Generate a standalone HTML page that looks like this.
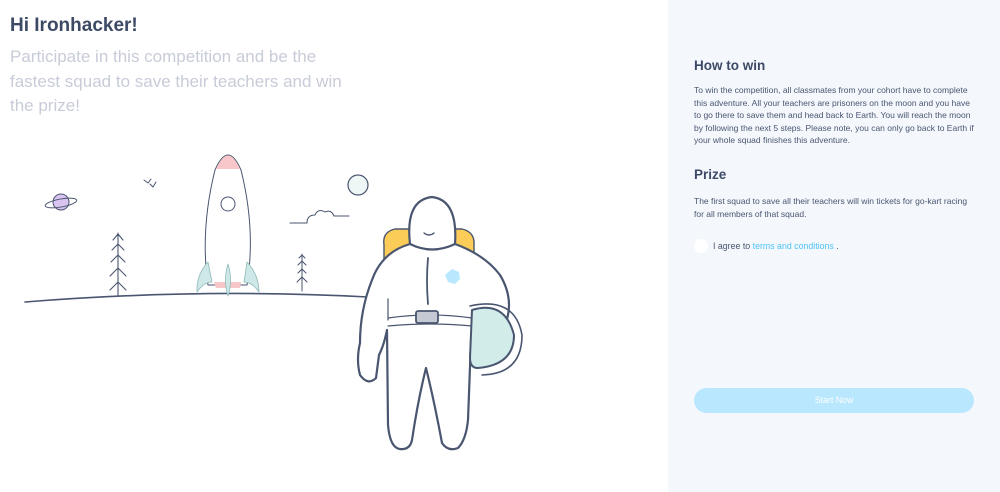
<!DOCTYPE html>
<html><head><meta charset="utf-8"><style>
*{margin:0;padding:0;box-sizing:border-box}
body{width:1000px;height:492px;overflow:hidden;background:#fff;font-family:"Liberation Sans",sans-serif;position:relative}
.left{position:absolute;left:0;top:0;width:668px;height:492px;background:#fff}
h1{position:absolute;left:10px;top:15px;font-size:19px;font-weight:bold;color:#3d4a66}
.sub{position:absolute;left:10px;top:45px;width:345px;font-size:17px;line-height:24.5px;color:#c8ccd8}
.right{position:absolute;left:668px;top:0;width:332px;height:492px;background:#f4f7fc}
h2{position:absolute;left:26px;font-size:13.5px;font-weight:bold;color:#3d4a66}
.p{position:absolute;left:26px;width:280px;font-size:8.5px;line-height:12.5px;color:#4a5670}
.chk{position:absolute;left:26px;top:239px;width:14px;height:14px;border-radius:50%;background:#fff}
.agree{position:absolute;left:45px;top:241px;font-size:8.8px;color:#4a5670}
.agree a{color:#4fc3f7;text-decoration:none}
.btn{position:absolute;left:26px;top:388px;width:280px;height:25px;border-radius:13px;background:#b9e7fe;color:#fff;font-size:8.8px;text-align:center;line-height:25px}
</style></head><body>
<div class="left">
<h1>Hi Ironhacker!</h1>
<div class="sub">Participate in this competition and be the fastest squad to save their teachers and win the prize!</div>
<svg width="668" height="492" style="position:absolute;left:0;top:0" fill="none" stroke="#4a5670" stroke-linecap="round" stroke-linejoin="round">
<path d="M25 302 Q200 288 368 297" stroke-width="1.6"/>
<circle cx="61" cy="202" r="8" fill="#d9c3f0" stroke-width="1"/>
<ellipse cx="61" cy="203" rx="16" ry="4" transform="rotate(-10 61 203)" stroke-width="1"/>
<path d="M144 180 l4 3 l3 -4 M150 184 l3 3 l3 -5" stroke-width="1"/>
<circle cx="358" cy="185" r="10" fill="#eef6f6" stroke-width="1.2"/>
<path d="M290 223 h17 q0 -8 8 -8 q3 -7 10 -3 q6 -3 9 4 h15" stroke-width="1"/>
<path d="M118 296 V233 M113 240 l5 -6 l5 6 M112 250 l6 -6 l6 6 M111 262 l7 -7 l7 7 M110 276 l8 -8 l8 8 M110 290 l8 -8 l8 8" stroke-width="1.1"/>
<path d="M302 291 V254 M299 258 l3 -3 l3 3 M298 265 l4 -4 l4 4 M298 273 l4 -4 l4 4 M297 282 l5 -5 l5 5" stroke-width="1"/>
<path d="M208 285 Q200 230 215 170 Q228 140 241 170 Q256 230 247 285 Z" fill="#fff" stroke-width="1"/>
<path d="M216 169 Q228 142 240 169 Z" fill="#f7c7c9" stroke="none"/>
<path d="M214 282 L241 282 L240 288 L216 288 Z" fill="#f7c7c9" stroke="none"/>
<path d="M208 262 Q196 275 197 292 Q204 282 212 282 Z" fill="#cde8e6" stroke="#8fb9b8" stroke-width=".8"/>
<path d="M247 262 Q259 275 259 292 Q252 282 244 282 Z" fill="#cde8e6" stroke="#8fb9b8" stroke-width=".8"/>
<path d="M228 264 Q233 280 228 296 Q223 280 228 264 Z" fill="#cde8e6" stroke="#8fb9b8" stroke-width=".8"/>
<circle cx="228" cy="204" r="7" stroke-width="1"/>
<!-- backpack -->
<path d="M384 245 Q382 232 395 229 L462 229 Q475 232 474 245 L474 262 L384 262 Z" fill="#fbcd58" stroke-width="1.4"/>
<!-- body -->
<path d="M410 244 Q382 252 372 280 Q360 310 360 343 Q356 360 360 375 Q368 386 376 378 L379 355 Q384 345 387 330 L388 425 Q390 448 400 449 Q410 450 412 440 Q418 400 426 368 Q434 400 442 443 Q448 452 458 448 Q466 440 468 420 L471 340 L505 325 Q515 300 500 275 Q485 255 455 244 Z" fill="#fff" stroke-width="2.2"/>
<path d="M410 244 Q405 200 432 197 Q458 200 455 244 Q432 255 410 244 Z" fill="#fff" stroke-width="2.2"/>
<path d="M424 233 Q429 237 434 233" stroke-width="1.4"/>
<path d="M428 258 Q426 280 428 304" stroke-width="1.8"/>
<path d="M388 299 V320" stroke-width="1.2"/>
<path d="M388 318 Q430 312 472 318 M388 326 Q430 322 472 326" stroke-width="1.2"/>
<rect x="416" y="311" width="22" height="12" rx="2" fill="#c5c9d3" stroke-width="1.8"/>
<polygon points="452,269 459,272 460,279 455,284 448,282 445,275" fill="#b9e7fe" stroke="none"/>
<path d="M472 310 Q505 300 514 335 Q514 365 478 368 Q470 368 470 358 Z" fill="#d2ecea" stroke-width="2"/>
<path d="M470 306 Q515 296 522 335 Q522 374 482 375" stroke-width="1.6"/>
</svg>
</div>
<div class="right">
<h2 style="top:58px">How to win</h2>
<div class="p" style="top:84px">To win the competition, all classmates from your cohort have to complete this adventure. All your teachers are prisoners on the moon and you have to go there to save them and head back to Earth. You will reach the moon by following the next 5 steps. Please note, you can only go back to Earth if your whole squad finishes this adventure.</div>
<h2 style="top:167px">Prize</h2>
<div class="p" style="top:195px">The first squad to save all their teachers will win tickets for go-kart racing for all members of that squad.</div>
<div class="chk"></div>
<div class="agree">I agree to <a>terms and conditions</a> .</div>
<div class="btn">Start Now</div>
</div>
</body></html>
